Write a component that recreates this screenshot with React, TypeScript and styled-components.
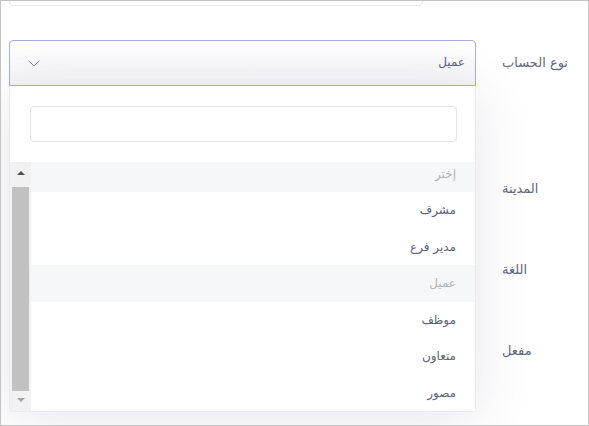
import React from "react";
import styled, { createGlobalStyle } from "styled-components";

const GlobalStyle = createGlobalStyle`
  html, body {
    margin: 0;
    padding: 0;
    background: #ffffff;
  }
  * {
    box-sizing: border-box;
  }
`;

const options = [
  { label: "إختر", muted: true },
  { label: "مشرف" },
  { label: "مدير فرع" },
  { label: "عميل", muted: true },
  { label: "موظف" },
  { label: "متعاون" },
  { label: "مصور" },
];

const ChevronDown = () => (
  <svg width="12" height="7" viewBox="0 0 12 7" fill="none">
    <path d="M0.5 0.8l5.5 5l5.5 -5" stroke="#8a8c99" strokeWidth="1" />
  </svg>
);

export default function App() {
  return (
    <>
      <GlobalStyle />
      <Frame>
        <Form>
          <TopRow>
            <PrevInput />
          </TopRow>
          <Row>
            <Label>نوع الحساب</Label>
            <Field>
              <SelectBox>
                <SelectValue>عميل</SelectValue>
                <ChevronDown />
              </SelectBox>
              <Dropdown>
                <SearchInput />
                <ListArea>
                  <Options>
                    {options.map((o, i) => (
                      <Option key={i} $muted={!!o.muted}>
                        {o.label}
                      </Option>
                    ))}
                  </Options>
                  <Scrollbar>
                    <ScrollButton>
                      <ArrowUp />
                    </ScrollButton>
                    <Thumb />
                    <ScrollButton $bottom>
                      <ArrowDown />
                    </ScrollButton>
                  </Scrollbar>
                </ListArea>
              </Dropdown>
            </Field>
          </Row>
          <Row $tall>
            <Label $bottom>المدينة</Label>
            <Field>
              <PlainInput />
              <PlainInput />
            </Field>
          </Row>
          <Row>
            <Label>اللغة</Label>
            <Field>
              <PlainInput />
            </Field>
          </Row>
          <Row>
            <Label>مفعل</Label>
            <Field>
              <PlainInput />
            </Field>
          </Row>
        </Form>
      </Frame>
    </>
  );
}

const Frame = styled.div`
  width: 589px;
  height: 426px;
  border: 1px solid #c3c3c3;
  overflow: hidden;
  background: #ffffff;
  font-family: "DejaVu Sans", "Noto Sans", sans-serif;
`;

const Form = styled.div`
  direction: rtl;
  display: flex;
  flex-direction: column;
  gap: 35px;
`;

const TopRow = styled.div`
  display: flex;
  justify-content: flex-end;
  margin-top: -32px;
  margin-bottom: -1px;
  padding-left: 8px;
`;

const PrevInput = styled.div`
  width: 414px;
  height: 37px;
  border: 1px solid #e7e7ec;
  border-radius: 4px;
`;

const Row = styled.div<{ $tall?: boolean }>`
  display: flex;
  align-items: stretch;
  height: ${(p) => (p.$tall ? "91px" : "46px")};
`;

const Label = styled.div<{ $bottom?: boolean }>`
  flex: 1;
  display: flex;
  align-items: center;
  justify-content: flex-end;
  align-self: ${(p) => (p.$bottom ? "flex-end" : "stretch")};
  height: 46px;
  padding-left: 26px;
  padding-bottom: 2px;
  font-size: 13px;
  color: #656879;
`;

const Field = styled.div`
  position: relative;
  width: 467px;
  margin-left: 8px;
  display: flex;
  flex-direction: column;
  justify-content: space-between;
`;

const SelectBox = styled.div`
  height: 46px;
  display: flex;
  align-items: center;
  justify-content: space-between;
  padding: 0 10px 0 18px;
  border: 1px solid #a9aadf;
  border-radius: 4px 4px 0 0;
  background: linear-gradient(#ffffff, #f4f4f8);
`;

const SelectValue = styled.span`
  font-size: 12px;
  color: #606273;
  padding-bottom: 2px;
`;

const PlainInput = styled.div`
  height: 46px;
  border: 1px solid #e5e5ea;
  border-radius: 4px;
`;

const Dropdown = styled.div`
  position: absolute;
  top: 46px;
  left: 0;
  right: 0;
  height: 326px;
  background: #ffffff;
  border: 1px solid #ebebef;
  border-top: none;
  border-radius: 0 0 4px 4px;
  box-shadow: 0 6px 55px rgba(50, 50, 90, 0.12);
  padding-top: 20px;
  display: flex;
  flex-direction: column;
  gap: 20px;
  z-index: 2;
`;

const SearchInput = styled.div`
  height: 36px;
  margin: 0 18px 0 20px;
  border: 1px solid #e3e3e8;
  border-radius: 4px;
`;

const ListArea = styled.div`
  flex: 1;
  display: flex;
  overflow: hidden;
`;

const Options = styled.div`
  flex: 1;
  display: flex;
  flex-direction: column;
  overflow: hidden;
  & > :first-child {
    margin-top: -6.5px;
  }
`;

const Option = styled.div<{ $muted: boolean }>`
  flex: none;
  height: 36.5px;
  display: flex;
  align-items: center;
  padding-right: 19px;
  font-size: 12px;
  color: ${(p) => (p.$muted ? "#b0b2ba" : "#606273")};
  background: ${(p) => (p.$muted ? "#f6f7f9" : "#ffffff")};
`;

const Scrollbar = styled.div`
  width: 21px;
  display: flex;
  flex-direction: column;
  background: #f1f1f1;
  padding: 0 2px 0 2px;
`;

const ScrollButton = styled.div<{ $bottom?: boolean }>`
  height: ${(p) => (p.$bottom ? "20px" : "25px")};
  display: flex;
  align-items: center;
  justify-content: center;
  padding-bottom: ${(p) => (p.$bottom ? "2px" : "4px")};
`;

const Thumb = styled.div`
  flex: 1;
  background: #c1c1c1;
`;

const ArrowUp = styled.span`
  width: 0;
  height: 0;
  border-left: 4px solid transparent;
  border-right: 4px solid transparent;
  border-bottom: 4px solid #505050;
`;

const ArrowDown = styled.span`
  width: 0;
  height: 0;
  border-left: 4px solid transparent;
  border-right: 4px solid transparent;
  border-top: 4px solid #a3a3a3;
`;
